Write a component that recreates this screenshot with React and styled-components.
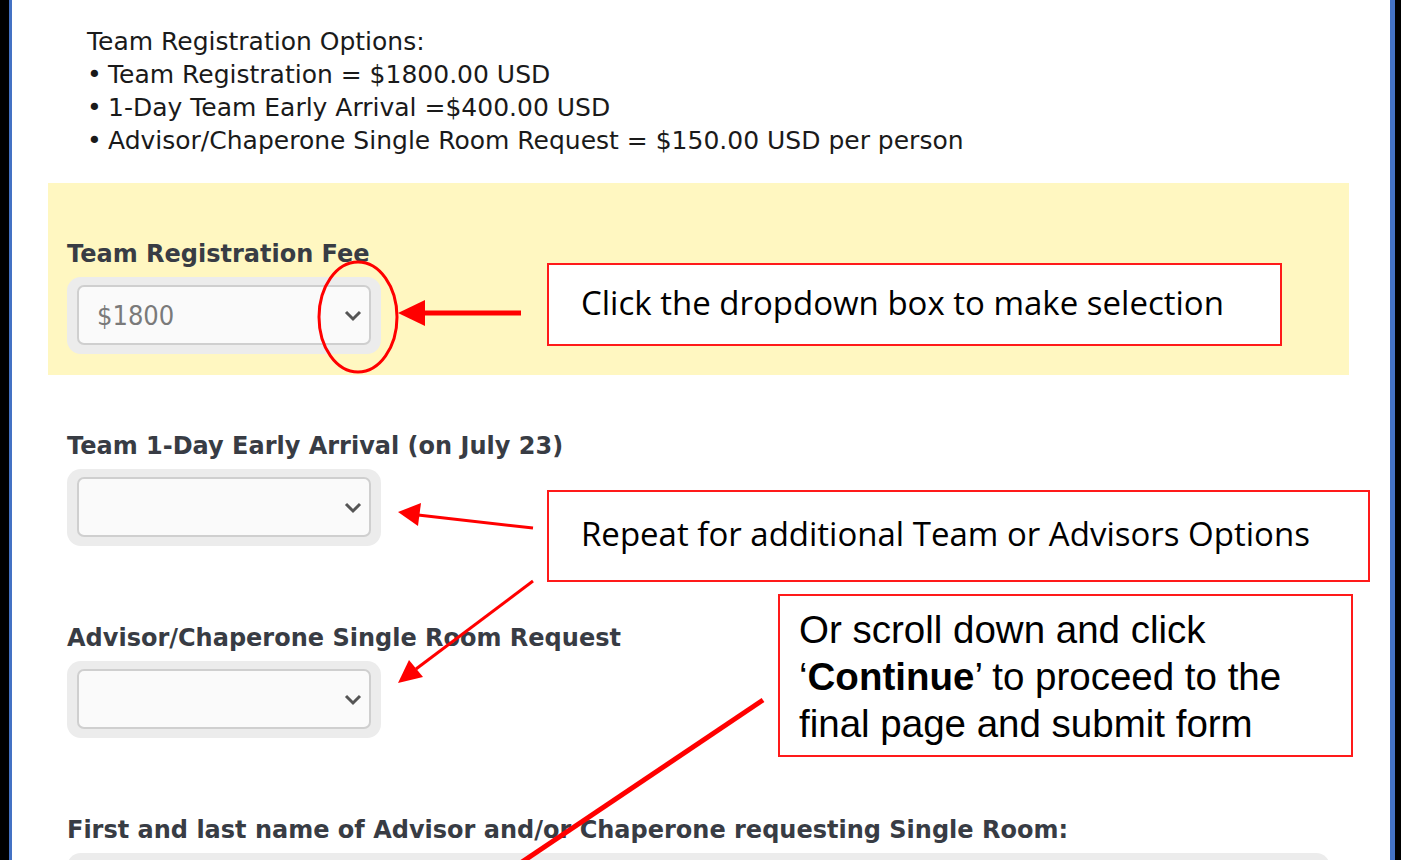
import React from "react";
import styled, { createGlobalStyle } from "styled-components";

const Global = createGlobalStyle`
  html, body { margin: 0; padding: 0; background: #000; }
  body { width: 1401px; height: 860px; overflow: hidden; }
`;

const Frame = styled.div`
  position: relative;
  box-sizing: border-box;
  width: 1401px;
  height: 860px;
  overflow: hidden;
  background: #000;
  padding: 0 6px 0 9px;
  display: flex;
`;

const Page = styled.div`
  flex: 1;
  background: #fff;
  border-left: 3px solid #4472c4;
  border-right: 5px solid #4472c4;
  padding: 25px 0 0 36px;
  display: flex;
  flex-direction: column;
  overflow: hidden;
`;

const Intro = styled.div`
  flex-shrink: 0;
  font-family: "DejaVu Sans", Tahoma, sans-serif;
  font-size: 25px;
  line-height: 33px;
  color: #1a1a1a;
  padding-left: 39px;
  margin-bottom: 26px;
`;

const Bullets = styled.ul`
  list-style: none;
  margin: 0;
  padding: 0;
`;

const Bullet = styled.li`
  &::before {
    content: "•";
    display: inline-block;
    width: 21px;
  }
`;

const Section = styled.section`
  flex-shrink: 0;
  box-sizing: border-box;
  width: 1301px;
  height: 192px;
  padding: 57px 19px 0;
  background: ${(p) => (p.$highlight ? "#fff7c1" : "transparent")};
`;

const Label = styled.div`
  font-family: "DejaVu Sans", Verdana, sans-serif;
  font-weight: bold;
  font-size: 24px;
  line-height: 28px;
  color: #383c44;
  margin-bottom: 9px;
  white-space: nowrap;
`;

const SelectWell = styled.div`
  box-sizing: border-box;
  width: ${(p) => (p.$wide ? "1263px" : "314px")};
  height: 77px;
  padding: 8px 10px;
  border-radius: 14px;
  background: #ececec;
`;

const SelectBox = styled.div`
  box-sizing: border-box;
  height: 60px;
  border: 2px solid #cfcfcf;
  border-radius: 7px;
  background: #fafafa;
  display: flex;
  align-items: center;
  justify-content: space-between;
  padding: 0 6px 0 18px;
  font-family: "DejaVu Sans Condensed", "DejaVu Sans", sans-serif;
  font-size: 27px;
  color: #7a7a7a;
`;

const Chevron = () => (
  <svg width="20" height="14" viewBox="0 0 20 14">
    <path d="M3 4 L10 11 L17 4" fill="none" stroke="#555" strokeWidth="3" />
  </svg>
);

const Overlay = styled.svg`
  position: absolute;
  left: 0;
  top: 0;
  pointer-events: none;
`;

const Callout = styled.div`
  position: absolute;
  box-sizing: border-box;
  left: ${(p) => p.$x}px;
  top: ${(p) => p.$y}px;
  width: ${(p) => p.$w}px;
  height: ${(p) => p.$h}px;
  border: 2px solid #ff1a1a;
  background: #fff;
  color: #000;
  display: flex;
  align-items: ${(p) => (p.$top ? "flex-start" : "center")};
  padding: ${(p) => (p.$top ? "10px 30px 0 19px" : "0 0 4px 32px")};
  font-family: ${(p) =>
    p.$arial ? '"Liberation Sans", Arial, sans-serif' : '"Open Sans", Lato, sans-serif'};
  font-size: ${(p) => p.$size}px;
  line-height: ${(p) => p.$lh || 40}px;
`;

const Select = ({ value }) => (
  <SelectWell>
    <SelectBox>
      <span>{value}</span>
      <Chevron />
    </SelectBox>
  </SelectWell>
);

export default function App() {
  return (
    <>
      <Global />
      <Frame>
        <Page>
          <Intro>
            Team Registration Options:
            <Bullets>
              <Bullet>Team Registration = $1800.00 USD</Bullet>
              <Bullet>1-Day Team Early Arrival =$400.00 USD</Bullet>
              <Bullet>Advisor/Chaperone Single Room Request = $150.00 USD per person</Bullet>
            </Bullets>
          </Intro>
          <Section $highlight>
            <Label>Team Registration Fee</Label>
            <Select value="$1800" />
          </Section>
          <Section>
            <Label>Team 1-Day Early Arrival (on July 23)</Label>
            <Select value="" />
          </Section>
          <Section>
            <Label>Advisor/Chaperone Single Room Request</Label>
            <Select value="" />
          </Section>
          <Section>
            <Label>First and last name of Advisor and/or Chaperone requesting Single Room:</Label>
            <SelectWell $wide />
          </Section>
        </Page>

        <Callout $x={547} $y={263} $w={735} $h={83} $size={33}>
          Click the dropdown box to make selection
        </Callout>
        <Callout $x={547} $y={490} $w={823} $h={92} $size={33}>
          Repeat for additional Team or Advisors Options
        </Callout>
        <Callout $x={778} $y={594} $w={575} $h={163} $size={38.5} $lh={47} $arial $top>
          <div>
            Or scroll down and click ‘<b>Continue</b>’ to proceed to the final page and submit form
          </div>
        </Callout>

        <Overlay width="1401" height="860" viewBox="0 0 1401 860">
          <ellipse cx="358" cy="317" rx="39" ry="55" fill="none" stroke="#ff0000" strokeWidth="3" />
          <line x1="521" y1="313" x2="420" y2="313" stroke="#ff0000" strokeWidth="5" />
          <polygon points="398,313 425,300 425,326" fill="#ff0000" />
          <line x1="533" y1="528" x2="418" y2="515" stroke="#ff0000" strokeWidth="3" />
          <polygon points="398,512 421,503 418,526" fill="#ff0000" />
          <line x1="533" y1="581" x2="416" y2="669" stroke="#ff0000" strokeWidth="3" />
          <polygon points="398,683 409,660 423,677" fill="#ff0000" />
          <line x1="763" y1="700" x2="519" y2="864" stroke="#ff0000" strokeWidth="5" />
        </Overlay>
      </Frame>
    </>
  );
}
